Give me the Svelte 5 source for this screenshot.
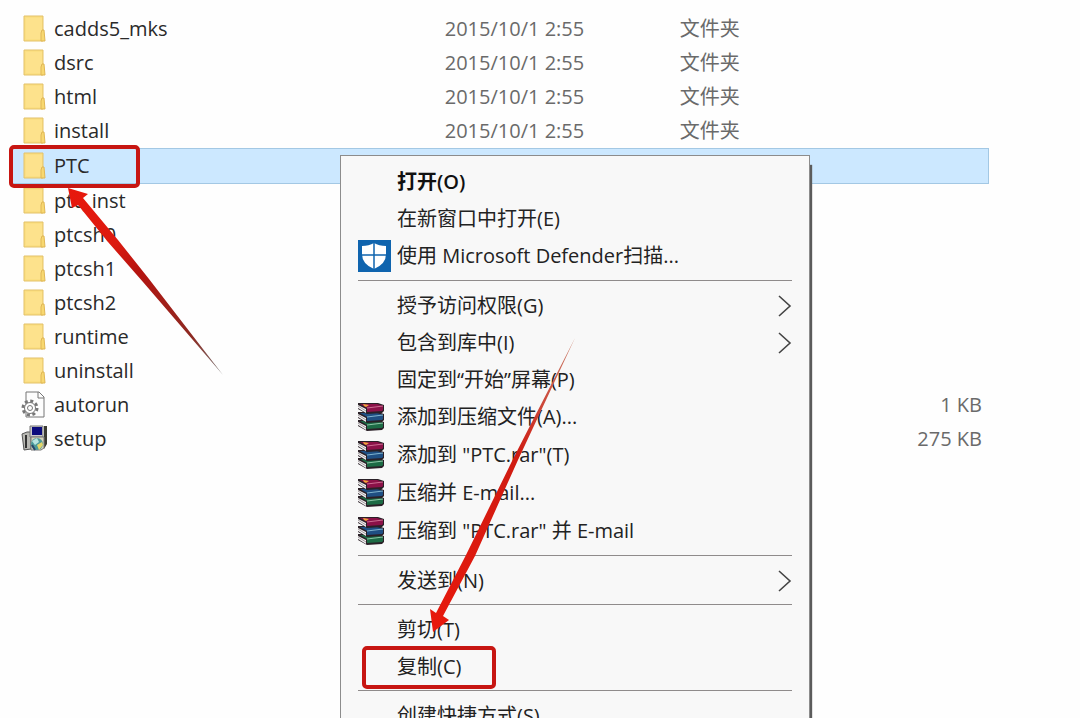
<script lang="ts">
	type FileRow = {
		name: string;
		kind: 'folder' | 'config' | 'installer';
		date?: string;
		type?: string;
		size?: string;
	};

	type MenuItem = {
		label: string;
		icon?: 'shield' | 'books';
		bold?: boolean;
		submenu?: boolean;
	};

	const date = '2015/10/1 2:55';

	const files: FileRow[] = [
		{ name: 'cadds5_mks', kind: 'folder', date, type: '文件夹' },
		{ name: 'dsrc', kind: 'folder', date, type: '文件夹' },
		{ name: 'html', kind: 'folder', date, type: '文件夹' },
		{ name: 'install', kind: 'folder', date, type: '文件夹' },
		{ name: 'PTC', kind: 'folder' },
		{ name: 'ptc_inst', kind: 'folder' },
		{ name: 'ptcsh0', kind: 'folder' },
		{ name: 'ptcsh1', kind: 'folder' },
		{ name: 'ptcsh2', kind: 'folder' },
		{ name: 'runtime', kind: 'folder' },
		{ name: 'uninstall', kind: 'folder' },
		{ name: 'autorun', kind: 'config', size: '1 KB' },
		{ name: 'setup', kind: 'installer', size: '275 KB' }
	];

	const groups: MenuItem[][] = [
		[
			{ label: '打开(O)', bold: true },
			{ label: '在新窗口中打开(E)' },
			{ label: '使用 Microsoft Defender扫描...', icon: 'shield' }
		],
		[
			{ label: '授予访问权限(G)', submenu: true },
			{ label: '包含到库中(I)', submenu: true },
			{ label: '固定到“开始”屏幕(P)' },
			{ label: '添加到压缩文件(A)...', icon: 'books' },
			{ label: '添加到 "PTC.rar"(T)', icon: 'books' },
			{ label: '压缩并 E-mail...', icon: 'books' },
			{ label: '压缩到 "PTC.rar" 并 E-mail', icon: 'books' }
		],
		[{ label: '发送到(N)', submenu: true }],
		[{ label: '剪切(T)' }, { label: '复制(C)' }],
		[{ label: '创建快捷方式(S)' }]
	];

	let selected = $state('PTC');
</script>

{#snippet book(y: number, cover: string, light: string)}
	<g transform="translate(0 {y})">
		<path d="M0 0 H20 L26 2 V8 L24 10 L9 11 L0 6 Z" fill="#2a2027" />
		<path d="M2 1 H19 L25 3 L9 5 Z" fill={cover} />
		<path d="M9 5 L25 3 V7 L24 8 L9 9 Z" fill={cover} />
		<path d="M9 5 L25 3" stroke={light} />
		<path d="M0 2 L8 6 V10 L0 5 Z" fill="#f3f0f1" />
		<path d="M0 3 L8 8" stroke="#8a8488" stroke-width="0.8" />
	</g>
{/snippet}

<main class="explorer">
	<table class="files">
		<colgroup>
			<col class="col-name" />
			<col class="col-date" />
			<col class="col-type" />
			<col class="col-size" />
		</colgroup>
		<tbody>
			{#each files as file (file.name)}
				<tr class:selected={selected === file.name} onclick={() => (selected = file.name)}>
					<td>
						<span class="name">
							{#if file.kind === 'folder'}
								<svg class="file-icon" width="24" height="28" viewBox="0 0 24 28" aria-hidden="true">
									<path d="M2 1 H21 V26 H2 Z" fill="#fbdf82" stroke="#e3c168" />
									<path d="M4 3 H20 V24 H4 Z" fill="#fde28c" />
									<path d="M19 26 V18 L20 15 H22 L23 26 Z" fill="#f8d870" stroke="#dfb655" />
								</svg>
							{:else if file.kind === 'config'}
								<svg class="file-icon" width="24" height="28" viewBox="0 0 24 28" aria-hidden="true">
									<path d="M4 1 H17 L22 6 V26 H4 Z" fill="#fdfdfd" stroke="#777" />
									<path d="M16 1 V7 H22" fill="none" stroke="#777" />
									<circle cx="8" cy="17" r="7" fill="none" stroke="#777" stroke-width="3" stroke-dasharray="3 2.5" />
									<circle cx="8" cy="17" r="5.5" fill="#fff" stroke="#777" />
									<circle cx="8" cy="17" r="2.5" fill="#fff" stroke="#777" />
								</svg>
							{:else}
								<svg class="file-icon" width="24" height="28" viewBox="0 0 24 28" aria-hidden="true">
									<path d="M0 9 L5 7 H9 V24 L2 25 Z" fill="#b9b9b4" stroke="#555" />
									<path d="M4 10 V23" stroke="#333" stroke-width="2" />
									<path d="M8 1 H21 V12 H8 Z" fill="#c8c8c8" stroke="#777" />
									<path d="M10 2 H20 V10 H10 Z" fill="#0b0b7c" />
									<path d="M22 1 H25 V19 L22 24 Z" fill="#3b3b32" />
									<path d="M9 12 H22 V23 L19 25 H9 Z" fill="#d7d4bd" stroke="#777" />
									<circle cx="15" cy="19" r="6" fill="#4d9a9a" />
									<path d="M10 16 L15 13 L17 17 L13 20 Z" fill="#b7e3e0" />
									<path d="M15 20 L20 17 L21 20 L17 25 Z" fill="#e5d66a" />
									<path d="M10 20 L13 25" stroke="#27466b" stroke-width="2" />
								</svg>
							{/if}
							{file.name}
						</span>
					</td>
					<td class="detail">{file.date ?? ''}</td>
					<td class="detail">{file.type ?? ''}</td>
					<td class="detail size">{file.size ?? ''}</td>
				</tr>
			{/each}
		</tbody>
	</table>

	<div class="menu" role="menu">
		{#each groups as group, i}
			{#if i > 0}
				<hr />
			{/if}
			{#each group as item}
				<button class="item" class:bold={item.bold} class:with-icon={item.icon} role="menuitem">
					<span class="icon">
						{#if item.icon === 'shield'}
							<svg width="33" height="32" viewBox="0 0 33 32" aria-hidden="true">
								<path d="M0 0 H33 V32 H0 Z" fill="#0f64ae" />
								<path d="M16 3 Q21 6 28 6 V14 Q28 24 16 29 Q4 24 4 14 V6 Q11 6 16 3 Z" fill="#fff" />
								<path d="M16 3 V29 M4 15 H28" stroke="#0f64ae" stroke-width="1.5" />
							</svg>
						{:else if item.icon === 'books'}
							<svg width="27" height="28" viewBox="0 0 27 28" aria-hidden="true">
								{@render book(17, '#1d6b45', '#8cc7a8')}
								{@render book(9, '#1f4f83', '#7fb5d2')}
								{@render book(0, '#8b1148', '#cf6a92')}
								<path d="M5 1 L11 2 L8 4 L6 3 Z" fill="#f0a53a" />
							</svg>
						{/if}
					</span>
					<span class="label">{item.label}</span>
					{#if item.submenu}
						<svg width="14" height="22" viewBox="0 0 14 22" aria-hidden="true">
							<path d="M1 1 L12 11 L1 21" fill="none" stroke="#444" stroke-width="1.6" />
						</svg>
					{/if}
				</button>
			{/each}
		{/each}
	</div>

	<svg class="marks" width="520" height="700" viewBox="0 0 520 700" aria-hidden="true">
		<defs>
			<linearGradient id="fade-left" gradientUnits="userSpaceOnUse" x1="68" y1="187" x2="223" y2="375">
				<stop offset="0" stop-color="#e8180c" />
				<stop offset="0.3" stop-color="#dc1a10" />
				<stop offset="0.45" stop-color="#b51410" />
				<stop offset="0.8" stop-color="#8c2a22" />
				<stop offset="1" stop-color="#777" />
			</linearGradient>
			<linearGradient id="fade-right" gradientUnits="userSpaceOnUse" x1="433" y1="632" x2="575" y2="338">
				<stop offset="0" stop-color="#e8180c" />
				<stop offset="0.6" stop-color="#cf1c12" />
				<stop offset="1" stop-color="#c9806c" />
			</linearGradient>
		</defs>
		<rect x="11" y="147" width="127" height="39" rx="3" />
		<rect x="364" y="648" width="130" height="39" rx="3" />
		<path d="M68 188 L88 194 L83 198 L118 240 L149 279 L223 375 L143 282 L108 242 L78 205 L72 208 Z" fill="url(#fade-left)" />
		<path d="M433 632 L430 609 L436 613 L466 555 L514 457 L575 338 L518 460 L475 556 L443 616 L449 620 Z" fill="url(#fade-right)" />
	</svg>
</main>

<style>
	:global(body) {
		background: #fefefe;
	}

	.explorer {
		position: relative;
		box-sizing: border-box;
		height: 100vh;
		padding: 12px 91px 0 10px;
		overflow: hidden;
		color: #2a2a2a;
		font-family: 'Open Sans', 'Noto Sans CJK SC', sans-serif;
		font-size: 20px;
		line-height: 28px;
	}

	.files {
		width: 100%;
		table-layout: fixed;
		border-collapse: separate;
		border-spacing: 0;
	}

	.col-name {
		width: 44%;
	}

	.col-date {
		width: 24%;
	}

	.col-type {
		width: 16%;
	}

	td {
		height: 34px;
		padding: 0 7px 0 4px;
		white-space: nowrap;
	}

	td:first-child {
		padding-left: 12px;
	}

	.selected td {
		border: solid #a3c8e4;
		border-width: 1px 0;
		background: #cce8ff;
	}

	.selected td:last-child {
		border-right-width: 1px;
	}

	.name {
		display: flex;
		align-items: center;
		gap: 8px;
	}

	.detail {
		color: #6a6a6a;
	}

	.size {
		text-align: right;
	}

	.file-icon {
		overflow: visible;
	}

	.menu {
		position: absolute;
		top: 155px;
		left: 340px;
		box-sizing: border-box;
		width: 470px;
		padding: 7px 17px;
		border: 1px solid #8c8c8c;
		background: #f8f8f8;
		box-shadow: 3px 9px 1px -1px #5c5c5c;
	}

	.item {
		display: flex;
		align-items: center;
		width: 100%;
		height: 37px;
		padding: 0;
		border: 0;
		background: none;
		color: #222;
		font: inherit;
		text-align: left;
	}

	.with-icon {
		height: 38px;
	}

	.bold {
		color: #111;
		font-weight: 600;
	}

	.icon {
		display: flex;
		width: 39px;
	}

	.label {
		flex: 1;
	}

	hr {
		margin: 5px 0 6px;
		border: 0;
		border-top: 1px solid #8f8b8b;
	}

	.marks {
		position: absolute;
		top: 0;
		left: 0;
		overflow: visible;
		pointer-events: none;
	}

	.marks rect {
		fill: none;
		stroke: #c71612;
		stroke-width: 4;
	}
</style>
